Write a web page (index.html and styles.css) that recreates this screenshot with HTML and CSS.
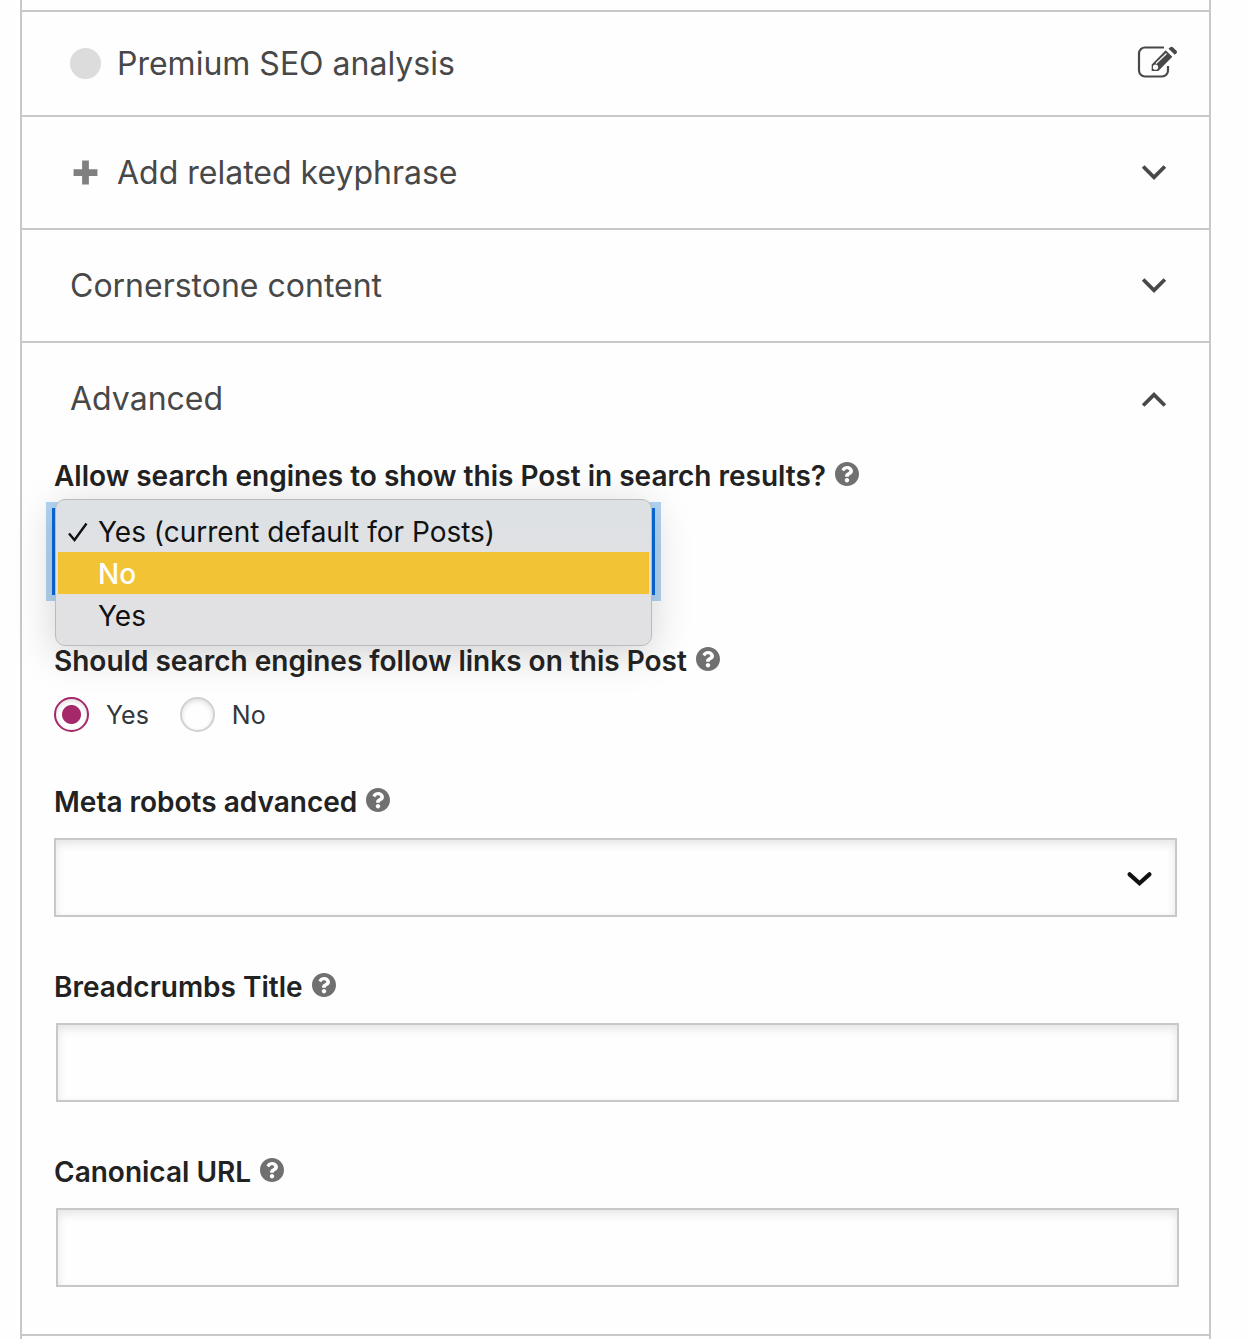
FILE: index.html
```html
<!DOCTYPE html>
<html lang="en">
<head>
    <meta charset="UTF-8">
    <meta name="viewport" content="width=device-width, initial-scale=1.0">
    <title>SEO settings</title>
    <link rel="stylesheet" href="styles.css">
</head>
<body>
    <!-- Shared icons -->
    <svg class="sprite" aria-hidden="true">
        <symbol id="chevron" viewBox="0 0 24 24">
            <path d="M2 6l10 10L22 6" fill="none" stroke="currentColor" stroke-width="3.500"/>
        </symbol>
        <symbol id="help" viewBox="8 8 496 496">
            <path fill="currentColor" d="M504 256c0 136.997-111.043 248-248 248S8 392.997 8 256C8 119.083 119.043 8 256 8s248 111.083 248 248zM262.655 90c-54.497 0-89.255 22.957-116.549 63.758-3.536 5.286-2.353 12.415 2.715 16.258l34.699 26.31c5.205 3.947 12.621 3.008 16.665-2.122 17.864-22.658 30.113-35.797 57.303-35.797 20.429 0 45.698 13.148 45.698 32.958 0 14.976-12.363 22.667-32.534 33.976C247.128 238.528 216 254.941 216 296v4c0 6.627 5.373 12 12 12h56c6.627 0 12-5.373 12-12v-1.333c0-28.462 83.186-29.647 83.186-106.667 0-58.002-60.165-102-116.531-102zM256 338c-25.365 0-46 20.635-46 46 0 25.364 20.635 46 46 46s46-20.636 46-46c0-25.364-20.635-46-46-46z"/>
        </symbol>
    </svg>

    <main class="metabox">
        <button type="button" class="section-toggle compact">
            <span class="score-bullet"></span>
            <span class="section-title">Premium SEO analysis</span>
            <svg class="edit-icon" viewBox="0 0 40 36" aria-hidden="true">
                <path d="M27 1.500H8a6 6 0 0 0-6 6v17a6 6 0 0 0 6 6h17a6 6 0 0 0 6-6V20" fill="none" stroke="currentColor" stroke-width="2.200"/>
                <path fill="currentColor" d="M14.700 18.500L28.700 4.300l6.600 6.400L21.300 25h-6.600zM31.500 2.700l1.700-1.500q1.300-1 2.600 0l3.700 3.600q1 1.200 0 2.400l-1.700 1.600z"/>
                <path d="M19 17.500L29.500 7.500" stroke="#fefefe" stroke-width="1.200"/>
                <circle cx="18.500" cy="21.200" r="2.600" fill="#fefefe"/>
            </svg>
        </button>

        <button type="button" class="section-toggle" aria-expanded="false">
            <svg class="plus-icon" viewBox="0 0 26 26" aria-hidden="true">
                <path d="M13 1.500v23M1.500 13h23" stroke="currentColor" stroke-width="6.500"/>
            </svg>
            <span class="section-title">Add related keyphrase</span>
            <svg class="chevron" aria-hidden="true"><use href="#chevron"/></svg>
        </button>

        <button type="button" class="section-toggle" aria-expanded="false">
            <span class="section-title">Cornerstone content</span>
            <svg class="chevron" aria-hidden="true"><use href="#chevron"/></svg>
        </button>

        <button type="button" class="section-toggle" aria-expanded="true">
            <span class="section-title">Advanced</span>
            <svg class="chevron up" aria-hidden="true"><use href="#chevron"/></svg>
        </button>

        <div class="section-content">
            <div class="field">
                <div class="field-label">
                    <label for="noindex">Allow search engines to show this Post in search results?</label>
                    <a href="#" class="help" aria-label="Help"><svg><use href="#help"/></svg></a>
                </div>
                <div class="select-open">
                    <select id="noindex">
                        <option>Yes (current default for Posts)</option>
                        <option>No</option>
                        <option>Yes</option>
                    </select>
                    <ul class="menu" role="listbox">
                        <li role="option" aria-selected="true">
                            <svg class="check" viewBox="0 0 20 20" aria-hidden="true"><path d="M1 11.500l5.500 6.500L18.500 1.500" fill="none" stroke="currentColor" stroke-width="2.400"/></svg>
                            Yes (current default for Posts)
                        </li>
                        <li role="option" class="active">No</li>
                        <li role="option">Yes</li>
                    </ul>
                </div>
            </div>

            <div class="field" role="radiogroup" aria-labelledby="follow-label">
                <div class="field-label">
                    <span id="follow-label">Should search engines follow links on this Post</span>
                    <a href="#" class="help" aria-label="Help"><svg><use href="#help"/></svg></a>
                </div>
                <div class="radios">
                    <input type="radio" name="follow" id="follow-yes" checked>
                    <label for="follow-yes">Yes</label>
                    <input type="radio" name="follow" id="follow-no">
                    <label for="follow-no">No</label>
                </div>
            </div>

            <div class="field">
                <div class="field-label">
                    <label for="robots">Meta robots advanced</label>
                    <a href="#" class="help" aria-label="Help"><svg><use href="#help"/></svg></a>
                </div>
                <div class="select-box">
                    <select id="robots" class="control">
                        <option></option>
                    </select>
                    <svg class="select-arrow" viewBox="0 0 24 24" aria-hidden="true"><path d="M2.500 8l9.500 8.500L21.500 8" fill="none" stroke="currentColor" stroke-width="4" stroke-linecap="round"/></svg>
                </div>
            </div>

            <div class="field">
                <div class="field-label">
                    <label for="breadcrumbs">Breadcrumbs Title</label>
                    <a href="#" class="help" aria-label="Help"><svg><use href="#help"/></svg></a>
                </div>
                <input type="text" id="breadcrumbs" class="control text">
            </div>

            <div class="field">
                <div class="field-label">
                    <label for="canonical">Canonical URL</label>
                    <a href="#" class="help" aria-label="Help"><svg><use href="#help"/></svg></a>
                </div>
                <input type="text" id="canonical" class="control text">
            </div>
        </div>
    </main>
</body>
</html>
```
FILE: styles.css
```css
* {
    box-sizing: border-box;
}

body {
    margin: 0;
    background: #fefefe;
    color: #222;
    font-family: Inter, "Liberation Sans", sans-serif;
    font-size: 28px;
}

.sprite {
    display: none;
}

.metabox {
    margin: 0 37px 0 20px;
    padding: 10px 0 3px;
    border: solid #c8c8c8;
    border-width: 0 2px;
}

/* Collapsible rows */
.section-toggle {
    display: flex;
    align-items: center;
    width: 100%;
    height: 113px;
    padding: 0 42px 0 48px;
    border: 0;
    border-top: 2px solid #c8c8c8;
    background: none;
    color: #484848;
    font-family: inherit;
    font-size: 32px;
    text-align: left;
    cursor: pointer;
}

.section-toggle.compact {
    height: 105px;
    padding-right: 32px;
}

.section-title {
    flex: 1;
}

.score-bullet {
    width: 31px;
    height: 31px;
    margin-right: 16px;
    border-radius: 50%;
    background: #dcdcdc;
}

.plus-icon {
    width: 27px;
    height: 27px;
    margin: 0 18px 0 2px;
    color: #808080;
}

.edit-icon {
    width: 40px;
    height: 36px;
}

.chevron {
    width: 26px;
    height: 26px;
}

.chevron.up {
    transform: rotate(180deg);
}

/* Advanced section */
.section-content {
    padding: 2px 32px 47px;
    border-bottom: 2px solid #c8c8c8;
}

.field {
    margin-bottom: 50px;
}

.field:last-child {
    margin-bottom: 0;
}

.field-label {
    display: flex;
    align-items: center;
    gap: 9px;
    height: 40px;
    margin-bottom: 16px;
    font-weight: 600;
}

.help {
    height: 28px;
    color: #707070;
}

.help svg {
    display: block;
    width: 24px;
    height: 24px;
}

.control {
    display: block;
    width: 100%;
    height: 79px;
    padding: 0 16px;
    border: 2px solid #c8c8c8;
    border-radius: 0;
    background: #fefefe;
    box-shadow: inset 0 4px 10px rgba(0, 0, 0, 0.1);
    font: inherit;
    appearance: none;
}

.control.text {
    margin: 0 -2px 0 2px;
}

.select-box {
    position: relative;
}

.select-arrow {
    position: absolute;
    top: 28px;
    right: 25px;
    width: 25px;
    height: 25px;
    color: #111;
    pointer-events: none;
}

/* Open drop-down */
.select-open {
    position: relative;
    width: 599px;
    max-width: 100%;
    padding: 0 2px;
}

.select-open select {
    display: block;
    width: 100%;
    height: 79px;
    border: 0;
    background: #fefefe;
    box-shadow: 0 0 0 4px #0a6ad8, 0 0 0 10px #b2d4f4;
    color: transparent;
    appearance: none;
}

.menu {
    position: absolute;
    top: -13px;
    left: 1px;
    right: 1px;
    margin: 0;
    padding: 10px 2px 9px;
    border: 1px solid #b9bbbc;
    border-radius: 10px;
    background: linear-gradient(#dde1e4, #e1e1e3 60%);
    box-shadow: 0 8px 40px rgba(0, 0, 0, 0.18);
    color: #111;
    list-style: none;
}

.menu li {
    position: relative;
    height: 42px;
    padding-left: 40px;
    line-height: 44px;
}

.menu .active {
    background: #f1c335;
    color: #fff;
    font-weight: 500;
}

.check {
    position: absolute;
    top: 12px;
    left: 10px;
    width: 20px;
    height: 20px;
}

/* Follow links */
.field-label,
.radios {
    position: relative;
}

.radios {
    display: flex;
    align-items: center;
    height: 35px;
    color: #32373c;
    font-size: 25px;
}

.radios input {
    width: 35px;
    height: 35px;
    margin: 0 17px 0 0;
    border: 2px solid #d0d0d0;
    border-radius: 50%;
    background: #fefefe;
    box-shadow: inset 0 2px 5px rgba(0, 0, 0, 0.12);
    appearance: none;
}

.radios input:checked {
    border-color: #a4286a;
    background: radial-gradient(circle, #a4286a 9px, #fefefe 10px);
}

.radios label {
    margin-right: 31px;
}
```
